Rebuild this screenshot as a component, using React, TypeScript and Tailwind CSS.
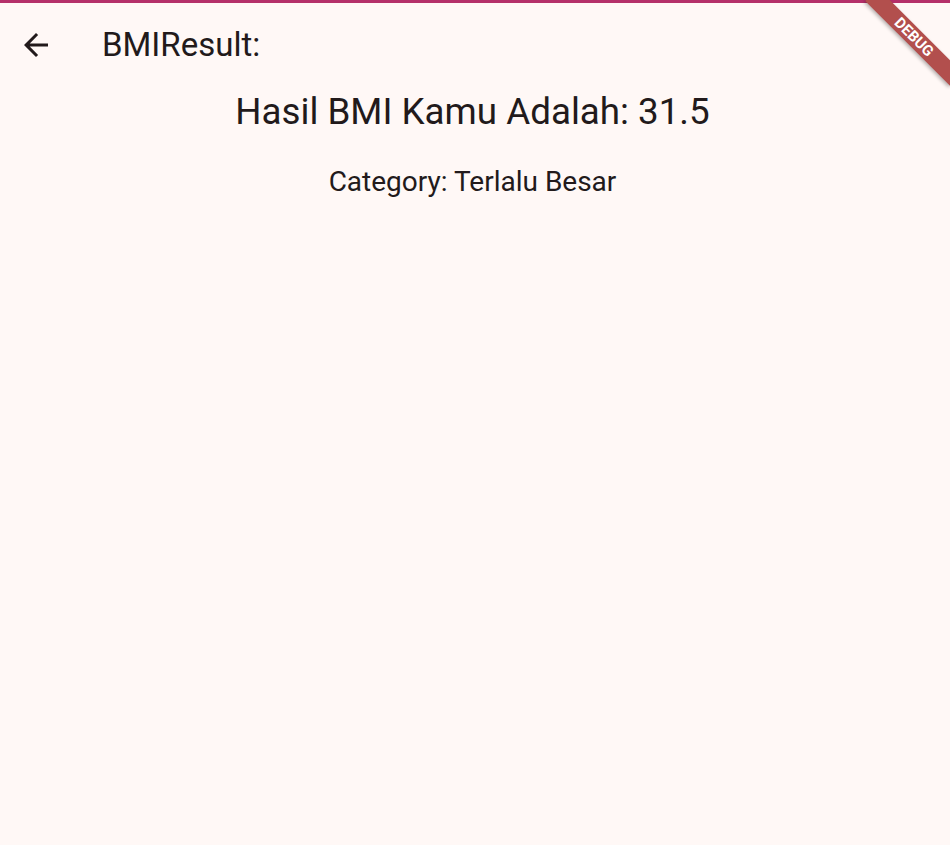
import React from "react";

const BackArrow: React.FC = () => (
  <svg width="36" height="36" viewBox="0 0 24 24" fill="#221a1b">
    <path d="M20 11H7.83l5.59-5.59L12 4l-8 8 8 8 1.41-1.41L7.83 13H20v-2z" />
  </svg>
);

const App: React.FC = () => {
  return (
    <div
      className="relative h-screen w-full overflow-hidden bg-[#fff8f6] text-[#221a1b]"
      style={{ fontFamily: "Roboto, 'Noto Sans', sans-serif" }}
    >
      {/* top accent line */}
      <div className="h-[3px] bg-[#b5306a]"></div>

      {/* App bar */}
      <header className="flex h-[84px] items-center">
        <div className="ml-[18px] flex h-[36px] w-[36px] items-center justify-center">
          <BackArrow />
        </div>
        <h1 className="ml-[48px] text-[33px] leading-[40px] font-normal">BMIResult:</h1>
      </header>

      {/* Result */}
      <main className="flex flex-col items-center pt-[5px] pr-[5px]">
        <p className="text-[36.75px] leading-[40px]">Hasil BMI Kamu Adalah: 31.5</p>
        <p className="mt-[35px] text-[28px] leading-[30px]">Category: Terlalu Besar</p>
      </main>

      {/* Debug banner */}
      <div className="absolute left-[854px] top-[28px] flex h-[18px] w-[120px] rotate-45 items-center justify-center bg-[#b24f4d] shadow-[0_2px_4px_rgba(0,0,0,0.3)]">
        <span className="text-[15px] leading-none font-bold text-white">DEBUG</span>
      </div>
    </div>
  );
};

export default App;
